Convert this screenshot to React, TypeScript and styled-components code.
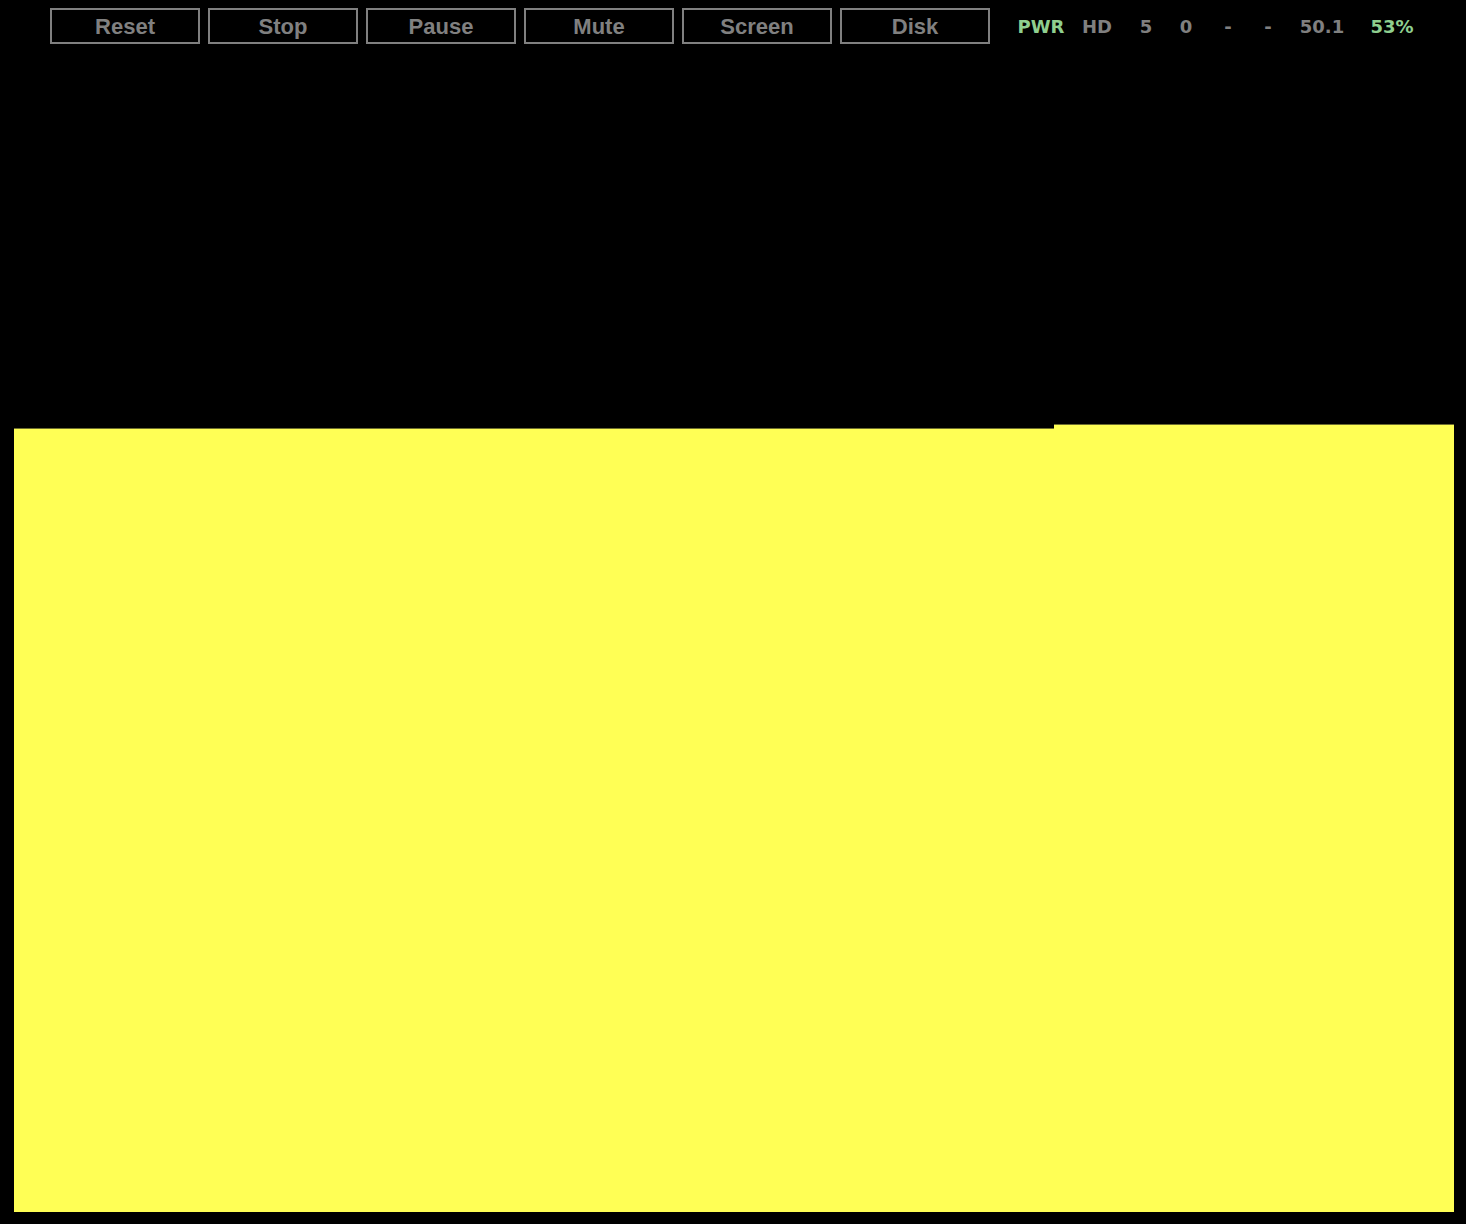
import React from "react";
import styled, { createGlobalStyle } from "styled-components";

const Global = createGlobalStyle`
  html, body {
    margin: 0;
    padding: 0;
    background: #000;
  }
  body {
    min-height: 1224px;
    font-family: "Liberation Sans", Arial, sans-serif;
  }
`;

const Page = styled.div`
  display: flex;
  flex-direction: column;
  background: #000;
`;

const Toolbar = styled.div`
  display: flex;
  align-items: center;
  padding: 8px 0 0 50px;
  height: 36px;
`;

const Buttons = styled.div`
  display: flex;
  gap: 8px;
`;

const Button = styled.button`
  box-sizing: border-box;
  width: 150px;
  height: 36px;
  margin: 0;
  padding: 2px 0 0;
  background: #000;
  border: 2px solid #808080;
  border-radius: 0;
  color: #808080;
  font-family: "Liberation Sans", Arial, sans-serif;
  font-weight: 700;
  font-size: 22px;
  line-height: 30px;
  cursor: pointer;
`;

const Status = styled.div`
  display: flex;
  margin-left: 26px;
  padding-top: 1px;
  font-family: "DejaVu Sans", Verdana, sans-serif;
  font-weight: 700;
  font-size: 18px;
  line-height: 35px;
`;

const Cell = styled.span<{ $w: number; $on?: boolean }>`
  width: ${(p) => p.$w}px;
  text-align: center;
  color: ${(p) => (p.$on ? "#8fcf8f" : "#808080")};
`;

const Screen = styled.div`
  display: flex;
  align-items: flex-end;
  margin-top: 380px;
  padding-left: 14px;
`;

const Plane = styled.div<{ $w: number; $h: number }>`
  width: ${(p) => p.$w}px;
  height: ${(p) => p.$h}px;
  background: #ffff55;
  box-shadow: inset 0 1px 0 #6f6f2f;
`;

const buttons = ["Reset", "Stop", "Pause", "Mute", "Screen", "Disk"];

const cells: { t: string; w: number; on?: boolean }[] = [
  { t: "PWR", w: 50, on: true },
  { t: "HD", w: 62 },
  { t: "5", w: 36 },
  { t: "0", w: 44 },
  { t: "-", w: 40 },
  { t: "-", w: 40 },
  { t: "50.1", w: 68 },
  { t: "53%", w: 72, on: true },
];

export default function App() {
  return (
    <>
      <Global />
      <Page>
        <Toolbar>
          <Buttons>
            {buttons.map((b) => (
              <Button key={b}>{b}</Button>
            ))}
          </Buttons>
          <Status>
            {cells.map((c, i) => (
              <Cell key={i} $w={c.w} $on={c.on}>
                {c.t}
              </Cell>
            ))}
          </Status>
        </Toolbar>
        <Screen>
          <Plane $w={1040} $h={784} />
          <Plane $w={400} $h={788} />
        </Screen>
      </Page>
    </>
  );
}
